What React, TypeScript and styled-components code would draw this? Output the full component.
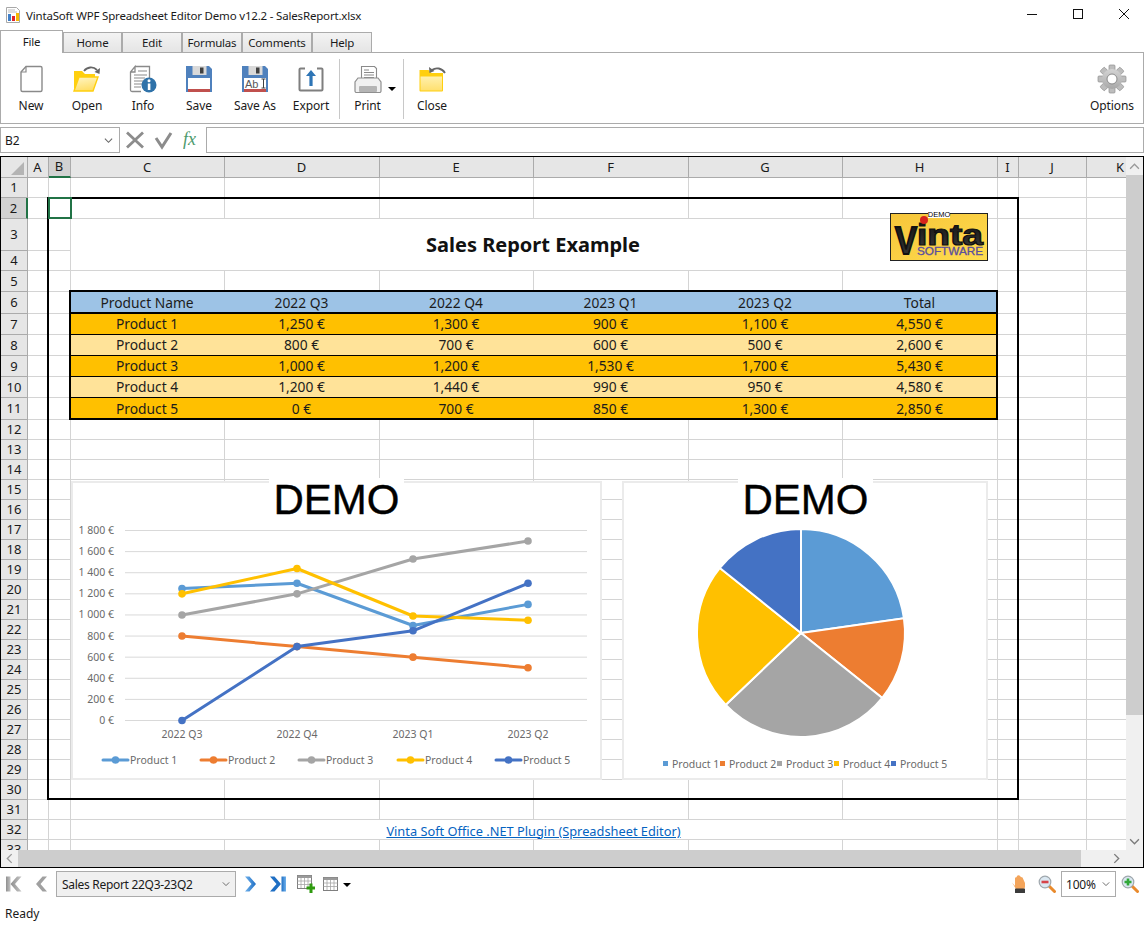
import React from 'react';
import styled, { createGlobalStyle, css } from 'styled-components';

const Global = createGlobalStyle`
  html, body { margin: 0; padding: 0; background: #fff; overflow: hidden; }
  #root { width: 1145px; height: 925px; }
  * { box-sizing: border-box; }
`;

const UI = `"Noto Sans", "Open Sans", sans-serif`;

const Page = styled.div`
  width: 1144px; height: 925px; display: flex; flex-direction: column;
  font-family: ${UI}; font-size: 12px; color: #1a1a1a; background: #fff;
`;
const TitleBar = styled.div`
  height: 30px; display: flex; align-items: center; padding-left: 5px; flex: none;
`;
const TitleText = styled.span`
  margin-left: 5px; font-size: 11.5px; letter-spacing: -0.18px;
`;
const WinButtons = styled.div`
  margin-left: auto; margin-right: -3px; display: flex; align-items: center; margin-top: -2px;
`;
const WinButton = styled.div`
  width: 46px; height: 28px; display: flex; align-items: center; justify-content: center;
`;
const TabStrip = styled.div`
  height: 23px; flex: none; display: flex; align-items: flex-end; position: relative; z-index: 1;
`;
const Tab = styled.div<{ $w: number; $active?: boolean }>`
  width: ${p => p.$w}px; display: flex; align-items: center; justify-content: center;
  border: 1px solid #ababab; font-size: 11.5px; letter-spacing: -0.2px;
  ${p => p.$active ? css`
    height: 23px; background: #fff; border-bottom: none; padding-bottom: 1px;
  ` : css`
    height: 20px; margin-bottom: 1px; border-bottom: none; background: linear-gradient(#f3f3f3, #e5e5e5);
  `}
`;
const Ribbon = styled.div`
  height: 72px; margin-top: -1px; flex: none; border: 1px solid #ababab; display: flex; padding-left: 2px; padding-right: 3px;
`;
const RibbonItem = styled.div<{ $w?: number; $pad?: number }>`
  position: relative; width: ${p => p.$w ?? 56}px; padding-right: ${p => p.$pad ?? 0}px;
  display: flex; flex-direction: column; align-items: center; padding-top: 10px;
`;
const RibbonIcon = styled.div`
  height: 32px; display: flex; align-items: center; justify-content: center;
`;
const RibbonLabel = styled.span`
  margin-top: 2px; font-size: 12px; line-height: 17px; white-space: nowrap; letter-spacing: -0.1px;
`;
const RibbonSep = styled.div`
  width: 1px; height: 60px; margin-top: 6px; background: #c8c8c8; flex: none;
`;
const DropArrow = styled.span`
  position: absolute; right: 7px; top: 34px; width: 0; height: 0;
  border-left: 4px solid transparent; border-right: 4px solid transparent; border-top: 4px solid #000;
`;
const RightItem = styled(RibbonItem)`
  margin-left: auto;
`;
const FormulaBar = styled.div`
  height: 26px; margin-top: 3px; display: flex; flex: none; align-items: stretch;
`;
const NameBox = styled.div`
  width: 120px; border: 1px solid #ababab; display: flex; align-items: center; justify-content: space-between;
  padding: 0 6px 0 4px; font-size: 12px;
`;
const FormulaButtons = styled.div`
  width: 86px; display: flex; align-items: center; padding-left: 5px; gap: 9px;
`;
const FormulaInput = styled.div`
  flex: 1; border: 1px solid #ababab;
`;
const Sheet = styled.div`
  margin-top: 3px; height: 712px; flex: none; border: 1px solid #000;
  display: grid; grid-template-columns: 1125px 17px; grid-template-rows: 693px 17px;
`;
const Viewport = styled.div`
  position: relative; overflow: hidden; background: #fff;
`;
const Cells = styled.div<{ $cols: string; $rows: string }>`
  display: grid; grid-template-columns: ${p => p.$cols}; grid-template-rows: ${p => p.$rows};
  font-family: ${UI}; font-size: 14px;
`;
const Corner = styled.div`
  background: #e6e6e6; border-right: 1px solid #ababab; border-bottom: 1px solid #ababab; position: relative;
  &::after {
    content: ''; position: absolute; right: 3px; bottom: 2px; width: 0; height: 0;
    border-left: 13px solid transparent; border-bottom: 13px solid #b4b4b4;
  }
`;
const ColHead = styled.div<{ $sel?: boolean }>`
  background: ${p => p.$sel ? '#d2d2d2' : '#e6e6e6'};
  border-right: 1px solid #ababab;
  border-bottom: ${p => p.$sel ? '2px solid #217346' : '1px solid #ababab'};
  display: flex; align-items: center; justify-content: center; font-size: 13px; line-height: 1; padding-right: 1px;
`;
const RowHead = styled.div<{ $sel?: boolean }>`
  background: ${p => p.$sel ? '#d2d2d2' : '#e6e6e6'};
  border-right: ${p => p.$sel ? '2px solid #217346' : '1px solid #ababab'};
  border-bottom: 1px solid #ababab;
  display: flex; align-items: center; justify-content: center; font-size: 13px; line-height: 1;
`;
const Cell = styled.div`
  border-right: 1px solid #d4d4d4; border-bottom: 1px solid #d4d4d4;
`;
const TitleCell = styled(Cell)`
  grid-column: span 6; grid-row: span 2; display: flex; align-items: center; justify-content: center;
  font-weight: 700; font-size: 20px; color: #111; padding-right: 2px;
`;
const LinkCell = styled(Cell)`
  grid-column: span 6; display: flex; align-items: center; justify-content: center; padding-top: 3px; padding-right: 1px;
`;
const SheetLink = styled.a`
  color: #0563c1; text-decoration: underline; font-size: 12.8px; line-height: 1;
`;
const tones = { head: '#9dc3e6', dark: '#ffc000', light: '#ffe399' };
const DataCell = styled.div<{ $tone: keyof typeof tones }>`
  background: ${p => tones[p.$tone]}; display: flex; align-items: center; justify-content: center;
  border-bottom: ${p => p.$tone === 'head' ? '2px solid #000' : '1px solid #000'};
  padding-top: ${p => p.$tone === 'head' ? 2 : 0}px; padding-right: 2px;
  font-size: 13.8px; line-height: 1; color: #1c1c1c;
`;
const RangeFrame = styled.div<{ $l: number; $t: number; $w: number; $h: number; $color?: string }>`
  position: absolute; left: ${p => p.$l}px; top: ${p => p.$t}px; width: ${p => p.$w}px; height: ${p => p.$h}px;
  border: 2px solid ${p => p.$color ?? '#000'}; pointer-events: none;
`;
const LogoBox = styled.div`
  position: absolute; left: 888px; top: 53px; width: 100px; height: 51px;
`;
const ChartCard = styled.div<{ $l: number; $w: number }>`
  position: absolute; left: ${p => p.$l}px; top: 324px; width: ${p => p.$w}px; height: 299px;
  background: #fff; border: 2px solid #ebebeb; overflow: visible;
`;
const Watermark = styled.div<{ $l: number; $w: number }>`
  position: absolute; left: ${p => p.$l}px; top: -5px; width: ${p => p.$w}px; height: 42px;
  background: #fff; color: #000; font-family: "Liberation Sans", Arial, sans-serif; font-size: 42px; line-height: 44px;
  text-align: center; white-space: nowrap; -webkit-text-stroke: 0.4px #000;
`;
const ChartSvg = styled.svg`
  position: absolute; left: -2px; top: -2px; display: block;
  text { font-family: ${UI}; font-size: 10.5px; fill: #6a6a6a; }
`;
const VScroll = styled.div`
  background: #f0f0f0; display: flex; flex-direction: column; position: relative;
`;
const ScrollArrow = styled.div`
  height: 18px; width: 100%; flex: none; display: flex; align-items: center; justify-content: center;
`;
const VThumb = styled.div`
  height: 540px; background: #cdcdcd; flex: none;
`;
const HScroll = styled.div`
  background: #f0f0f0; display: flex; align-items: stretch;
`;
const HArrow = styled.div`
  width: 17px; flex: none; display: flex; align-items: center; justify-content: center;
`;
const HThumb = styled.div`
  width: 1063px; background: #cdcdcd; flex: none;
`;
const HFill = styled.div`
  flex: 1; display: flex; align-items: center; justify-content: flex-end; padding-right: 4px;
`;
const ScrollCorner = styled.div`
  background: #f0f0f0;
`;
const NavBar = styled.div`
  height: 32px; display: flex; align-items: center; flex: none;
`;
const Slot = styled.div<{ $w?: number }>`
  width: ${p => p.$w ?? 28}px; height: 100%; display: flex; align-items: center; justify-content: center; flex: none;
`;
const SheetCombo = styled.div`
  width: 180px; height: 26px; border: 1px solid #ababab; background: #f0f0f0; display: flex; align-items: center;
  justify-content: space-between; padding: 0 5px 0 5px; font-size: 12px; letter-spacing: -0.3px; flex: none;
`;
const ZoomCombo = styled.div`
  width: 55px; height: 26px; border: 1px solid #ababab; display: flex; align-items: center;
  justify-content: space-between; padding: 0 5px 0 4px; font-size: 12px; letter-spacing: -0.2px; flex: none;
`;
const SheetMenu = styled.div`
  width: 32px; height: 100%; display: flex; align-items: center; gap: 5px; padding-left: 3px; flex: none;
`;
const MiniArrow = styled.span`
  width: 0; height: 0; margin-top: 1px;
  border-left: 4px solid transparent; border-right: 4px solid transparent; border-top: 4px solid #000;
`;
const Spacer = styled.div`
  flex: 1;
`;
const StatusBar = styled.div`
  height: 25px; display: flex; align-items: center; padding: 2px 0 0 5px; font-size: 12px; flex: none;
`;

const Chevron = ({ dir = 'down', color = '#666', size = 9 }: { dir?: string; color?: string; size?: number }) => {
  const pts: Record<string, string> = { down: '1,3 5,7 9,3', up: '1,7 5,3 9,7', left: '7,1 3,5 7,9', right: '3,1 7,5 3,9' };
  return (
    <svg width={size} height={size} viewBox="0 0 10 10">
      <polyline points={pts[dir]} fill="none" stroke={color} strokeWidth="1.2" />
    </svg>
  );
};

const AppIcon = () => (
  <svg width="16" height="16" viewBox="0 0 16 16">
    <path d="M1.5.5h10l3 3v12h-13z" fill="#fff" stroke="#a8a8a8" />
    <path d="M3 3h7M3 5h9" stroke="#bcbcbc" />
    <rect x="3" y="7" width="3" height="7" fill="#3f7fc9" />
    <rect x="7" y="9" width="3" height="5" fill="#e2242a" />
    <rect x="11" y="6" width="3" height="8" fill="#f6b800" />
  </svg>
);

const NewIcon = () => (
  <svg width="32" height="32" viewBox="0 0 32 32">
    <path d="M11 3.5H25.5a1.5 1.5 0 0 1 1.5 1.500V27a1.500 1.500 0 0 1-1.500 1.500H7.500A1.500 1.500 0 0 1 6 27V9z" fill="#fff" stroke="#8a8a8a" strokeWidth="1.4" />
    <path d="M11 3.500V9H6" fill="none" stroke="#8a8a8a" strokeWidth="1.2" />
  </svg>
);
const OpenIcon = () => (
  <svg width="32" height="32" viewBox="0 0 32 32">
    <defs>
      <linearGradient id="fo" x1="0" y1="0" x2="0.3" y2="1"><stop offset="0" stopColor="#fff6c8" /><stop offset="1" stopColor="#ffdf6a" /></linearGradient>
    </defs>
    <path d="M3 8h8l3 3h10v3H8L3 28z" fill="#ffcf0e" />
    <path d="M8 14h19l-5 14H3z" fill="url(#fo)" stroke="#ffcf0e" strokeWidth="1.4" />
    <path d="M13 8c3-4 9-5 13-1" fill="none" stroke="#666" strokeWidth="1.8" />
    <path d="M29 5l-.5 6-5-2z" fill="#666" />
  </svg>
);
const InfoIcon = () => (
  <svg width="32" height="32" viewBox="0 0 32 32">
    <path d="M8 3.500H22V20H3V9z" fill="#fff" />
    <path d="M8 3.500H22.500V16M14 28.500H5a1.500 1.500 0 0 1-1.500-1.500V9L8 3.500V9H3.500" fill="#fff" stroke="#8a8a8a" strokeWidth="1.3" />
    <path d="M11 8h9M7 12h13M7 15h11M7 18h9M7 21h8M7 24h7" stroke="#8a8a8a" strokeWidth="1.1" />
    <circle cx="22" cy="22" r="7.500" fill="#2f72a9" />
    <rect x="20.800" y="20.500" width="2.600" height="6.500" fill="#fff" />
    <circle cx="22" cy="17.800" r="1.500" fill="#fff" />
  </svg>
);
const SaveBody = () => (
  <>
    <path d="M3 3h23l3 3v23H3z" fill="#4f81bd" />
    <rect x="9.500" y="3" width="14" height="9" fill="#d9d9d9" />
    <rect x="17" y="4.500" width="3.500" height="6" fill="#404040" />
    <rect x="5" y="15" width="22" height="11" fill="#fff" />
    <rect x="5" y="26" width="22" height="3" fill="#c0504d" />
  </>
);
const SaveIcon = () => (
  <svg width="32" height="32" viewBox="0 0 32 32"><SaveBody /></svg>
);
const SaveAsIcon = () => (
  <svg width="32" height="32" viewBox="0 0 32 32">
    <SaveBody />
    <text x="6" y="24.500" fontFamily="Liberation Sans, sans-serif" fontSize="11" fill="#595959">Ab</text>
    <path d="M22.500 16h4M22.500 25h4M24.500 16v9" stroke="#404040" strokeWidth="1" fill="none" />
  </svg>
);
const ExportIcon = () => (
  <svg width="32" height="32" viewBox="0 0 32 32">
    <path d="M10 5.500H5.500a1 1 0 0 0-1 1v20a1 1 0 0 0 1 1h21a1 1 0 0 0 1-1v-20a1 1 0 0 0-1-1H22" fill="none" stroke="#7f7f7f" strokeWidth="2" />
    <path d="M16 7l5 6h-3.400v10h-3.200V13H11z" fill="#2e75b6" />
  </svg>
);
const PrintIcon = () => (
  <svg width="32" height="32" viewBox="0 0 32 32">
    <path d="M9.500 3.500h13l2 2V16h-15z" fill="#fff" stroke="#8a8a8a" strokeWidth="1.1" />
    <path d="M12 7h5M12 9.500h10M12 12h10M12 14.500h10" stroke="#8a8a8a" />
    <path d="M6 15h20l3 4v9a1.500 1.500 0 0 1-1.500 1.500h-23A1.500 1.500 0 0 1 3 28v-9z" fill="#f1f1f1" stroke="#8f8f8f" strokeWidth="1.2" />
    <rect x="7" y="23" width="18" height="6" rx="1" fill="#b5b5b5" />
  </svg>
);
const CloseIcon = () => (
  <svg width="32" height="32" viewBox="0 0 32 32">
    <defs>
      <linearGradient id="fc" x1="0" y1="0" x2="0" y2="1"><stop offset="0" stopColor="#fff0ad" /><stop offset="1" stopColor="#ffe06f" /></linearGradient>
    </defs>
    <path d="M3.500 7h9l3 3H27v17.500a1 1 0 0 1-1 1H4.500a1 1 0 0 1-1-1z" fill="#ffcf0e" />
    <rect x="4.500" y="13.500" width="21.500" height="14" fill="url(#fc)" />
    <path d="M29 10c-3-5-9-6-13-3" fill="none" stroke="#666" strokeWidth="1.8" />
    <path d="M13 4l.5 6 5-2z" fill="#666" />
  </svg>
);
const GearIcon = () => (
  <svg width="32" height="32" viewBox="0 0 32 32">
    <defs>
      <linearGradient id="gg" x1="0" y1="0" x2="0" y2="1"><stop offset="0" stopColor="#d4d4d4" /><stop offset="1" stopColor="#a8a8a8" /></linearGradient>
    </defs>
    {[0, 45, 90, 135, 180, 225, 270, 315].map(a => (
      <rect key={a} x="13" y="2" width="6" height="6.500" rx="1" fill="#bdbdbd" stroke="#8f8f8f" strokeWidth=".7" transform={`rotate(${a} 16 16)`} />
    ))}
    <circle cx="16" cy="16" r="10" fill="url(#gg)" />
    <circle cx="16" cy="16" r="5" fill="#fff" stroke="#8a8a8a" strokeWidth="1" />
  </svg>
);

const FirstIcon = () => (
  <svg width="18" height="18" viewBox="0 0 18 18">
    <defs><linearGradient id="ng" x1="0" y1="0" x2="1" y2="0"><stop offset="0" stopColor="#8f8f8f" /><stop offset="1" stopColor="#c4c4c4" /></linearGradient></defs>
    <rect x="1" y="1.500" width="4.500" height="15" fill="url(#ng)" />
    <path d="M16.500 1.500L10 9l6.500 7.500H12L5.500 9 12 1.500z" fill="url(#ng)" />
  </svg>
);
const PrevIcon = () => (
  <svg width="14" height="18" viewBox="0 0 14 18">
    <path d="M12 1.500L5.500 9l6.500 7.500H7.500L1 9l6.500-7.500z" fill="#a0a0a0" />
  </svg>
);
const NextIcon = () => (
  <svg width="14" height="18" viewBox="0 0 14 18">
    <defs><linearGradient id="nb" x1="0" y1="0" x2="1" y2="0"><stop offset="0" stopColor="#6fb1ec" /><stop offset="1" stopColor="#1f6fc4" /></linearGradient></defs>
    <path d="M2 1.500L8.500 9 2 16.500h4.500L13 9 6.500 1.500z" fill="url(#nb)" />
  </svg>
);
const LastIcon = () => (
  <svg width="18" height="18" viewBox="0 0 18 18">
    <defs><linearGradient id="lb" x1="0" y1="0" x2="1" y2="0"><stop offset="0" stopColor="#1f6fc4" /><stop offset="1" stopColor="#6fb1ec" /></linearGradient></defs>
    <path d="M1 1.500L7.500 9 1 16.500h4.500L12 9 5.500 1.500z" fill="#1f6fc4" />
    <rect x="12.500" y="1.500" width="4.500" height="15" fill="url(#lb)" />
  </svg>
);
const TableGlyph = () => (
  <>
    <rect x=".5" y=".5" width="14" height="13" fill="#fff" stroke="#7f7f7f" />
    <rect x=".5" y=".5" width="14" height="2.500" fill="#9a9a9a" />
    <path d="M.5 6h14M.5 9.500h14M4 3v10M7.500 3v10M11 3v10" stroke="#a6a6a6" strokeWidth=".8" />
  </>
);
const AddSheetIcon = () => (
  <svg width="18" height="19" viewBox="0 0 18 19">
    <TableGlyph />
    <path d="M9.500 11.500h3v-3h3v3h2.500v3h-2.500v3.500h-3v-3.500h-3z" fill="#2f9a0f" />
  </svg>
);
const SheetIcon = () => (
  <svg width="15" height="14" viewBox="0 0 15 14"><TableGlyph /></svg>
);
const HandIcon = () => (
  <svg width="16" height="20" viewBox="0 0 16 20">
    <path d="M1 8.500L4 12V4.500Q4 3 5.500 3.200L6 2Q7 .800 8.500 1.500L10 3Q12 3 12.200 5L14 9V13Q14 15 12 15H5z" fill="#f4a55b" />
    <rect x="4" y="14.500" width="10" height="4.500" fill="#3b3b3b" rx=".6" />
  </svg>
);
const MagnifierIcon = ({ plus }: { plus?: boolean }) => (
  <svg width="18" height="18" viewBox="0 0 18 18">
    <path d="M10.500 10.500l6 6" stroke="#e98a2c" strokeWidth="3" strokeLinecap="round" />
    <circle cx="7" cy="7" r="5.800" fill="#dbe8f2" stroke="#9fa7ad" strokeWidth="1.200" />
    {plus
      ? <path d="M3.500 7h7M7 3.500v7" stroke="#32a83a" strokeWidth="2.600" />
      : <path d="M3.500 7h7" stroke="#d6444a" strokeWidth="2.600" />}
  </svg>
);

const columns: [string, number][] = [
  ['A', 21], ['B', 22], ['C', 154], ['D', 155], ['E', 154], ['F', 155], ['G', 154], ['H', 155], ['I', 21], ['J', 68], ['K', 68],
];
const rowHeights = [20, 21, 32, 20, 21, 22, 21, 21, 21, 21, 22, ...Array(22).fill(20)];

const tableRows: { tone: keyof typeof tones; cells: string[] }[] = [
  { tone: 'head', cells: ['Product Name', '2022 Q3', '2022 Q4', '2023 Q1', '2023 Q2', 'Total'] },
  { tone: 'dark', cells: ['Product 1', '1,250 €', '1,300 €', '900 €', '1,100 €', '4,550 €'] },
  { tone: 'light', cells: ['Product 2', '800 €', '700 €', '600 €', '500 €', '2,600 €'] },
  { tone: 'dark', cells: ['Product 3', '1,000 €', '1,200 €', '1,530 €', '1,700 €', '5,430 €'] },
  { tone: 'light', cells: ['Product 4', '1,200 €', '1,440 €', '990 €', '950 €', '4,580 €'] },
  { tone: 'dark', cells: ['Product 5', '0 €', '700 €', '850 €', '1,300 €', '2,850 €'] },
];

const series = [
  { name: 'Product 1', color: '#5b9bd5', values: [1250, 1300, 900, 1100], total: 4550 },
  { name: 'Product 2', color: '#ed7d31', values: [800, 700, 600, 500], total: 2600 },
  { name: 'Product 3', color: '#a5a5a5', values: [1000, 1200, 1530, 1700], total: 5430 },
  { name: 'Product 4', color: '#ffc000', values: [1200, 1440, 990, 950], total: 4580 },
  { name: 'Product 5', color: '#4472c4', values: [0, 700, 850, 1300], total: 2850 },
];
const xs = [182, 297, 413, 528];
const yOf = (v: number) => 720 - (v * 190) / 1800;
const legendX = [103, 201, 299, 398, 496];

const LineChart = () => (
  <ChartSvg width="530" height="299" viewBox="71 481 530 299">
    {[0, 200, 400, 600, 800, 1000, 1200, 1400, 1600, 1800].map(v => (
      <g key={v}>
        <line x1="125" x2="587" y1={yOf(v) + 0.5} y2={yOf(v) + 0.5} stroke="#d9d9d9" />
        <text x="114" y={yOf(v) + 4} textAnchor="end">{v >= 1000 ? `1 ${String(v - 1000).padStart(3, '0')} €` : `${v} €`}</text>
      </g>
    ))}
    {['2022 Q3', '2022 Q4', '2023 Q1', '2023 Q2'].map((q, i) => (
      <text key={q} x={xs[i]} y="738" textAnchor="middle">{q}</text>
    ))}
    {series.map(s => (
      <g key={s.name}>
        <polyline fill="none" stroke={s.color} strokeWidth="3" strokeLinejoin="round" strokeLinecap="round"
          points={s.values.map((v, i) => `${xs[i]},${yOf(v) + 0.5}`).join(' ')} />
        {s.values.map((v, i) => <circle key={i} cx={xs[i]} cy={yOf(v) + 0.5} r="3.800" fill={s.color} />)}
      </g>
    ))}
    {series.map((s, i) => (
      <g key={s.name}>
        <line x1={legendX[i]} x2={legendX[i] + 25} y1="760" y2="760" stroke={s.color} strokeWidth="3" strokeLinecap="round" />
        <circle cx={legendX[i] + 12.500} cy="760" r="3.800" fill={s.color} />
        <text x={legendX[i] + 27} y="764">{s.name}</text>
      </g>
    ))}
  </ChartSvg>
);

const grandTotal = series.reduce((a, s) => a + s.total, 0);
const cx = 801, cy = 633, rad = 104;
let acc = 0;
const slices = series.map(s => {
  const a0 = (acc / grandTotal) * Math.PI * 2;
  acc += s.total;
  const a1 = (acc / grandTotal) * Math.PI * 2;
  const p = (a: number) => `${(cx + rad * Math.sin(a)).toFixed(2)} ${(cy - rad * Math.cos(a)).toFixed(2)}`;
  return { color: s.color, d: `M${cx} ${cy}L${p(a0)}A${rad} ${rad} 0 ${a1 - a0 > Math.PI ? 1 : 0} 1 ${p(a1)}Z` };
});
const pieLegendX = [663, 720, 777, 834, 891];

const PieChart = () => (
  <ChartSvg width="365" height="299" viewBox="622 481 365 299">
    {slices.map(s => <path key={s.color} d={s.d} fill={s.color} stroke="#fff" strokeWidth="2" />)}
    {series.map((s, i) => (
      <g key={s.name}>
        <rect x={pieLegendX[i]} y="761" width="5" height="5" fill={s.color} />
        <text x={pieLegendX[i] + 9} y="768">{s.name}</text>
      </g>
    ))}
  </ChartSvg>
);

const VintaLogo = () => (
  <svg width="100" height="51" viewBox="0 0 100 51">
    <defs>
      <linearGradient id="ly" x1="0" y1="0" x2="1" y2="1"><stop offset="0" stopColor="#f6c53a" /><stop offset="1" stopColor="#ffdc4e" /></linearGradient>
      <linearGradient id="lk" x1="0" y1="0" x2="0" y2="1"><stop offset="0" stopColor="#111" /><stop offset="1" stopColor="#3a3a3a" /></linearGradient>
    </defs>
    <rect x="1.500" y="3.500" width="97" height="47" fill="url(#ly)" stroke="#222" />
    <text x="6" y="44" fontFamily="Liberation Sans, sans-serif" fontWeight="700" fontSize="39" fill="url(#lk)" stroke="#111" strokeWidth="2" textLength="22" lengthAdjust="spacingAndGlyphs">V</text>
    <text x="28" y="35" fontFamily="Liberation Sans, sans-serif" fontWeight="700" fontSize="29" fill="url(#lk)" stroke="#111" strokeWidth="1.200" textLength="66" lengthAdjust="spacingAndGlyphs">inta</text>
    <circle cx="35" cy="10" r="4" fill="#d6231c" />
    <text x="28" y="44.500" fontFamily="Liberation Sans, sans-serif" fontWeight="400" fontSize="10.500" fill="#5b4f9e" stroke="#5b4f9e" strokeWidth=".3" textLength="66" lengthAdjust="spacingAndGlyphs">SOFTWARE</text>
    <rect x="39" y="1" width="22" height="7" fill="#fff" />
    <text x="50" y="7" textAnchor="middle" fontFamily="Liberation Sans, sans-serif" fontSize="7.500" fill="#000">DEMO</text>
  </svg>
);

const ribbonItems: [string, React.ReactNode][] = [
  ['New', <NewIcon />], ['Open', <OpenIcon />], ['Info', <InfoIcon />], ['Save', <SaveIcon />], ['Save As', <SaveAsIcon />], ['Export', <ExportIcon />],
];
const tabs: [string, number][] = [['Home', 59], ['Edit', 60], ['Formulas', 60], ['Comments', 70], ['Help', 60]];

const gridCols = `27px ${columns.map(c => `${c[1]}px`).join(' ')}`;
const gridRows = `21px ${rowHeights.map(h => `${h}px`).join(' ')}`;

const renderRow = (r: number) => {
  const head = <RowHead key={`h${r}`} $sel={r === 2}>{r}</RowHead>;
  const plain = (k: string) => <Cell key={`${r}${k}`} />;
  if (r === 3) {
    return [head, plain('A'), plain('B'), <TitleCell key="title">Sales Report Example</TitleCell>, plain('I'), plain('J'), plain('K')];
  }
  if (r === 4) {
    return [head, plain('A'), plain('B'), plain('I'), plain('J'), plain('K')];
  }
  if (r === 32) {
    return [head, plain('A'), plain('B'), <LinkCell key="link"><SheetLink href="#">Vinta Soft Office .NET Plugin (Spreadsheet Editor)</SheetLink></LinkCell>, plain('I'), plain('J'), plain('K')];
  }
  if (r >= 6 && r <= 11) {
    const row = tableRows[r - 6];
    return [head, plain('A'), plain('B'),
      ...row.cells.map((c, i) => <DataCell key={`${r}-${i}`} $tone={row.tone}>{c}</DataCell>),
      plain('I'), plain('J'), plain('K')];
  }
  return [head, ...columns.map(c => plain(c[0]))];
};

export default function App() {
  return (
    <Page>
      <Global />
      <TitleBar>
        <AppIcon />
        <TitleText>VintaSoft WPF Spreadsheet Editor Demo v12.2 - SalesReport.xlsx</TitleText>
        <WinButtons>
          <WinButton><svg width="10" height="10" viewBox="0 0 10 10"><path d="M0 5.500h10" stroke="#111" /></svg></WinButton>
          <WinButton><svg width="10" height="10" viewBox="0 0 10 10"><rect x=".5" y=".5" width="9" height="9" fill="none" stroke="#111" /></svg></WinButton>
          <WinButton><svg width="10" height="10" viewBox="0 0 10 10"><path d="M0 0l10 10M10 0L0 10" stroke="#111" /></svg></WinButton>
        </WinButtons>
      </TitleBar>
      <TabStrip>
        <Tab $w={63} $active>File</Tab>
        {tabs.map(([t, w]) => <Tab key={t} $w={w}>{t}</Tab>)}
      </TabStrip>
      <Ribbon>
        {ribbonItems.map(([label, icon]) => (
          <RibbonItem key={label}><RibbonIcon>{icon}</RibbonIcon><RibbonLabel>{label}</RibbonLabel></RibbonItem>
        ))}
        <RibbonSep />
        <RibbonItem $w={63} $pad={8}><RibbonIcon><PrintIcon /></RibbonIcon><RibbonLabel>Print</RibbonLabel><DropArrow /></RibbonItem>
        <RibbonSep />
        <RibbonItem><RibbonIcon><CloseIcon /></RibbonIcon><RibbonLabel>Close</RibbonLabel></RibbonItem>
        <RightItem><RibbonIcon><GearIcon /></RibbonIcon><RibbonLabel>Options</RibbonLabel></RightItem>
      </Ribbon>
      <FormulaBar>
        <NameBox>B2<Chevron /></NameBox>
        <FormulaButtons>
          <svg width="20" height="20" viewBox="0 0 20 20"><path d="M2 2.500l16 15M18 2.500L2 17.500" stroke="#8c8c8c" strokeWidth="2.800" /></svg>
          <svg width="20" height="20" viewBox="0 0 20 20"><path d="M2 8l6 9L17 3" fill="none" stroke="#8c8c8c" strokeWidth="3" /></svg>
          <svg width="18" height="20" viewBox="0 0 18 20"><text x="0" y="15" fontFamily="Liberation Serif, serif" fontStyle="italic" fontSize="18" fill="#4d9a6c">fx</text></svg>
        </FormulaButtons>
        <FormulaInput />
      </FormulaBar>
      <Sheet>
        <Viewport>
          <Cells $cols={gridCols} $rows={gridRows}>
            <Corner />
            {columns.map(([c]) => <ColHead key={c} $sel={c === 'B'}>{c}</ColHead>)}
            {rowHeights.map((_, i) => renderRow(i + 1))}
          </Cells>
          <RangeFrame $l={46} $t={40} $w={972} $h={603} />
          <RangeFrame $l={47} $t={40} $w={24} $h={22} $color="#217346" />
          <RangeFrame $l={68} $t={133} $w={929} $h={130} />
          <LogoBox><VintaLogo /></LogoBox>
          <ChartCard $l={70} $w={531}>
            <LineChart />
            <Watermark $l={196} $w={135}>DEMO</Watermark>
          </ChartCard>
          <ChartCard $l={621} $w={366}>
            <PieChart />
            <Watermark $l={114} $w={135}>DEMO</Watermark>
          </ChartCard>
        </Viewport>
        <VScroll>
          <ScrollArrow><Chevron dir="up" color="#9a9a9a" size={11} /></ScrollArrow>
          <VThumb />
          <Spacer />
          <ScrollArrow><Chevron dir="down" color="#7a7a7a" size={11} /></ScrollArrow>
        </VScroll>
        <HScroll>
          <HArrow><Chevron dir="left" color="#9a9a9a" size={11} /></HArrow>
          <HThumb />
          <HFill><Chevron dir="right" color="#7a7a7a" size={11} /></HFill>
        </HScroll>
        <ScrollCorner />
      </Sheet>
      <NavBar>
        <Slot><FirstIcon /></Slot>
        <Slot><PrevIcon /></Slot>
        <SheetCombo>Sales Report 22Q3-23Q2<Chevron size={8} /></SheetCombo>
        <Slot><NextIcon /></Slot>
        <Slot><LastIcon /></Slot>
        <Slot><AddSheetIcon /></Slot>
        <SheetMenu><SheetIcon /><MiniArrow /></SheetMenu>
        <Spacer />
        <Slot><HandIcon /></Slot>
        <Slot><MagnifierIcon /></Slot>
        <ZoomCombo>100%<Chevron size={8} /></ZoomCombo>
        <Slot><MagnifierIcon plus /></Slot>
      </NavBar>
      <StatusBar>Ready</StatusBar>
    </Page>
  );
}
